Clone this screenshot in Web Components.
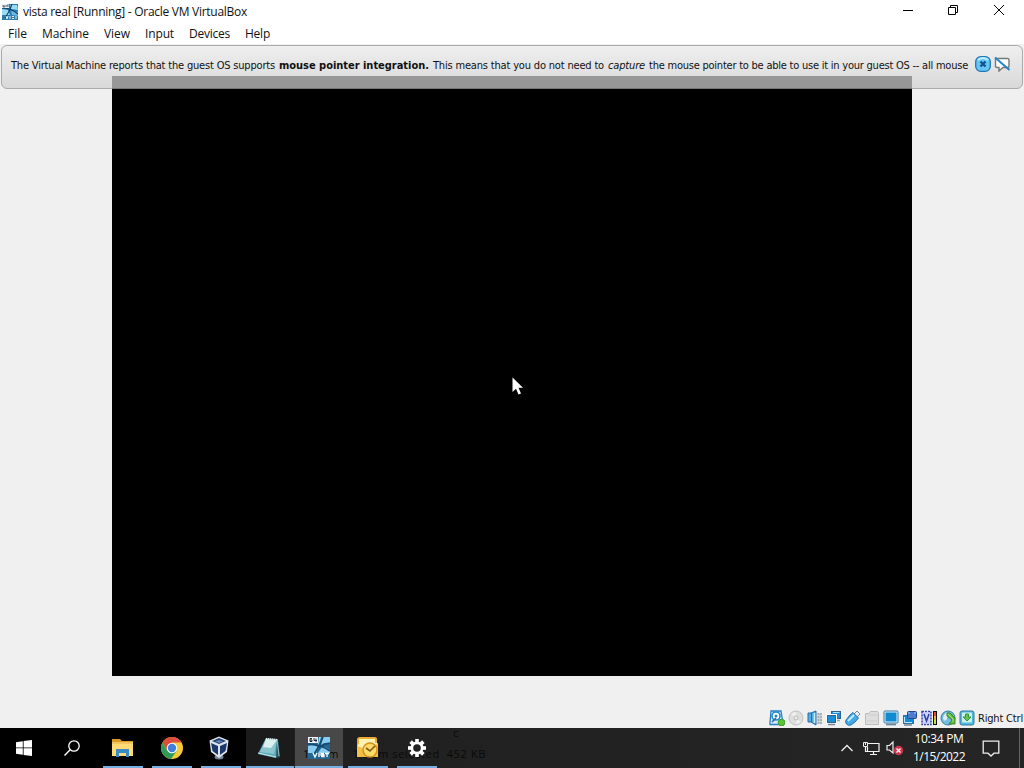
<!DOCTYPE html>
<html lang="en"><head><meta charset="utf-8"><title>vista real [Running] - Oracle VM VirtualBox</title>
<style>html,body{margin:0;width:1024px;height:768px;overflow:hidden;background:#f0f0f0}</style></head>
<body><vm-window></vm-window>
<script>
const define = (name, html, ready) => customElements.define(name, class extends HTMLElement {
  connectedCallback() {
    if (this.shadowRoot) return;
    const t = document.createElement('template');
    t.innerHTML = html;
    this.attachShadow({mode:'open'}).append(t.content.cloneNode(true));
    if (ready) ready(this);
  }
});

// Text run spaced to occupy the width given in its "w" attribute.
define('fit-text', '<style>:host{display:block;white-space:pre;flex:none}span{display:inline-block}</style><span><slot></slot></span>', el => {
  const w = +el.getAttribute('w'), s = el.shadowRoot.querySelector('span');
  el.style.width = w + 'px';
  const n = el.textContent.length;
  s.style.letterSpacing = ((w - s.getBoundingClientRect().width) / n) + 'px';
});

const svg = (w, h, body) => `<svg width="${w}" height="${h}" viewBox="0 0 ${w} ${h}" fill="none">${body}</svg>`;
const icons = {
  vista16: svg(16,16,`<rect width="16" height="16" fill="#2c7db0"/><path d="M0 5L6 6 8 11 0 11zM8 1L15 1 16 6 9 5z" fill="#9bdcf5"/><path d="M9 7L16 8V12L10 11z" fill="#6bb8e4"/><path d="M10 0Q8 7 3 14M0 4Q9 4 16 10" stroke="#0c3f68" stroke-width="1.1"/><rect width="7" height="4" fill="#e9f4fb"/><path d="M1 1V3H3V2H1M4 1V2H6M6 0V3" stroke="#345" stroke-width=".7"/><path d="M4 12L5 15 6 12M8 12V15M10 12.5H12M10 14.5H12M14 12V15" stroke="#fff" stroke-width=".9"/>`),
  min: svg(12,12,`<path d="M1 6.5H11" stroke="#000"/>`),
  restore: svg(12,12,`<path d="M1.5 3.5H8.5V10.5H1.5zM3.5 3V1.5H10.5V8.5H9" stroke="#000"/>`),
  close: svg(12,12,`<path d="M1 1L11 11M11 1L1 11" stroke="#000"/>`),
  ok: svg(16,16,`<rect x=".7" y=".7" width="14.6" height="14.6" rx="5" fill="#67c5f5" stroke="#2377b5" stroke-width="1.3"/><path d="M3 4Q8 0 13 4" stroke="#bcecff" stroke-width="2"/><path d="M5.5 5.5L10.5 10.5M10.5 5.5L5.5 10.5" stroke="#12548c" stroke-width="2.4"/>`),
  mute: svg(17,16,`<path d="M2 2.5H13.5Q15 2.5 15 4V10Q15 11.5 13.5 11.5H9L5 15V11.5H3Q1.5 11.5 1.5 10V3z" fill="#fff" stroke="#777" stroke-width="1.4"/><path d="M1 1.5L15.5 14" stroke="#2587c8" stroke-width="2"/>`),
  hdd: svg(16,16,`<path d="M2 1H12L14 13V14.5H1V12z" fill="#cfeafa" stroke="#2b7fc2" stroke-width="1.3"/><circle cx="7" cy="6" r="4" fill="#fff" stroke="#2388d0" stroke-width="1.6"/><circle cx="7" cy="6" r="1.5" fill="#2580c5"/><path d="M3 12L7 8" stroke="#2668a4" stroke-width="1.5"/><circle cx="12.5" cy="12.5" r="3.3" fill="#5bc336" stroke="#3d9c2a"/>`),
  cd: svg(16,16,`<circle cx="8" cy="8" r="7" fill="#dedede" stroke="#c1c1c1"/><path d="M8 8L3 4Q5 2 8 2zM8 8L13 12Q11 14 8 14z" fill="#eee"/><circle cx="8" cy="8" r="2" fill="#eee" stroke="#bbb"/>`),
  audio: svg(16,16,`<path d="M1 3H4L9 1V15L4 12H1z" fill="#53aee3" stroke="#226ca5"/><path d="M4.5 3V12" stroke="#2470a8"/><path d="M7.5 3V13" stroke="#c5efff" stroke-width="1.5"/><path d="M10 3H15V14H10z" fill="#d4d8da"/><path d="M11.5 3V14M14 3V14" stroke="#a3abb0" stroke-width="1.6" stroke-dasharray="2 1"/>`),
  net: svg(16,16,`<rect x="5.5" y="1.5" width="9" height="7" fill="#1b8ed8" stroke="#32618c"/><path d="M7 2.5H13.5" stroke="#a5e0ff"/><path d="M10 10.5H14" stroke="#9aa" stroke-width="1.5"/><rect x="1.5" y="5.5" width="8" height="7" fill="#1b8ed8" stroke="#fff" stroke-width="3"/><rect x="1.5" y="5.5" width="8" height="7" fill="#1b8ed8" stroke="#31658f"/><path d="M2 14.5H9" stroke="#789" stroke-width="1.5"/>`),
  usb: svg(16,16,`<path d="M8 5L12 1 15 4 11 8z" fill="#eee" stroke="#77899a"/><path d="M5 5L8 2.5 13.5 8 10 12 6 15Q3 16 1.5 14Q0 12 1 10z" fill="#43a9ea" stroke="#2370aa"/><path d="M3 11L9 5" stroke="#c1edff" stroke-width="2"/>`),
  folder: svg(16,16,`<path d="M1.5 3.5H5L6.5 1.5H13.5L14.5 3.5V14.5H1.5z" fill="#dedede" stroke="#bcbcbc"/><path d="M4 5H13M3 11H13" stroke="#ccc"/>`),
  screen: svg(16,16,`<rect x="1" y="1" width="14" height="12" rx="1" fill="#d8f3ff" stroke="#40769e"/><rect x="2.5" y="2.5" width="11" height="9" fill="#118bd0"/><path d="M3 14.5H13" stroke="#6c8799" stroke-width="1.7"/>`),
  record: svg(16,16,`<rect x="1.5" y="5.5" width="10" height="8" fill="#138bd5" stroke="#356f9b"/><path d="M2.5 7V12.5H10" stroke="#b9e8ff"/><path d="M2 15H10" stroke="#789" stroke-width="1.5"/><rect x="5.5" y="1.5" width="9" height="7" rx="1" fill="#4e7cce" stroke="#28488a"/><path d="M7 2V4M13 2V4" stroke="#a9cdfa"/>`),
  cpu: svg(16,16,`<rect x="1" y="1.5" width="9" height="13" fill="#cbd3ff" stroke="#3944a6" stroke-width="1.5" stroke-dasharray="2 1"/><rect x="2" y="2.5" width="7" height="11" fill="#cbd3ff"/><path d="M3 4L5.5 11 8 4" stroke="#303c9d" stroke-width="1.5"/><rect x="12" y="1" width="4" height="14" fill="#111"/><rect x="13" y="2" width="2" height="4" fill="#eb4e2a"/><rect x="13" y="6" width="2" height="4" fill="#efad29"/><rect x="13" y="10" width="2" height="4" fill="#c1e642"/>`),
  mouse: svg(16,16,`<circle cx="8" cy="8" r="7" fill="#70bee4" stroke="#397b9e"/><path d="M4 5Q7 1 8 4L7 9Q4 13 3 8z" fill="#dceef1"/><path d="M7 3H10L15 8V14H9L12 10 7 6z" fill="#63bd3c" stroke="#37892b"/><path d="M8 4L13 9V12" stroke="#a5df84"/>`),
  key: svg(16,16,`<rect x="1" y="1" width="14" height="14" rx="2" fill="#52b9e4" stroke="#347b9f"/><rect x="3" y="2.5" width="10" height="10" rx="1" fill="#c9f1e7"/><path d="M6.5 4H9.5V7H12L8 11 4 7H6.5z" fill="#63c44f" stroke="#369141"/>`),
  start: svg(16,16,`<path d="M0 2.2L6.8 1.2V7.5H0zM7.6 1.1L16 0V7.5H7.6zM0 8.3H6.8V14.8L0 13.8zM7.6 8.3H16V16L7.6 14.9z" fill="#fff"/>`),
  search: svg(16,16,`<circle cx="10" cy="6" r="5.2" stroke="#fff" stroke-width="1.3"/><path d="M6.2 9.8L.5 15.5" stroke="#fff" stroke-width="1.4"/>`),
  explorer: svg(24,24,`<path d="M1 3H9L11 5H22V20H1z" fill="#d99a26"/><path d="M1 6H22V20H1z" fill="#f2c65d"/><path d="M1 8H22V20H1z" fill="#ffda75"/><path d="M5 21V13H18V21H15V17H8V21z" fill="#398bc5"/>`),
  chrome: svg(24,24,`<circle cx="12" cy="12" r="11" fill="#f8ca37"/><path d="M2.47 6.5A11 11 0 0 1 21.53 6.5H12L7.2 14.7z" fill="#dd4c3c"/><path d="M2.47 6.5A11 11 0 0 0 11 23L16.8 14.7H7.2z" fill="#2f9d58"/><circle cx="12" cy="12" r="5.3" fill="#fff"/><circle cx="12" cy="12" r="4.2" fill="#3f80df"/>`),
  cube: svg(24,24,`<ellipse cx="12" cy="21" rx="4.5" ry="2.5" fill="#75849a"/><path d="M12 .5L21.5 4.5 20 16 12 22 4 16 2.5 4.5z" fill="#dbe4ed"/><path d="M5 5L12 2 19 5 12 8z" fill="#213f72"/><path d="M4 7L11 10V19L5.5 15zM13 10L20 7 18.5 15 13 19z" fill="#1b376b"/><path d="M8 5.5L12 4 16 5.5 12 7" fill="#6483ad"/>`),
  notepad: svg(24,24,`<path d="M9 2L21 3 23 21 19 22 1 18z" fill="#295867"/><path d="M9 2L20 3 19 22 1 18z" fill="#5ea9b9"/><path d="M9 3L20 4 17 18 3 16z" fill="#8bc6cf"/><path d="M9 3L20 4 14 12 6 11z" fill="#dcf0ef"/><path d="M20 3L22 20" stroke="#9bb9ba"/><path d="M9 2.5L20 3.5" stroke="#fff" stroke-dasharray="1 1"/><path d="M1 17L19 21" stroke="#c4e3e7"/>`),
  vista: svg(24,24,`<rect x="1" y="1" width="22" height="22" fill="#236692"/><path d="M1 10Q7 8 11 11L9 17 1 17zM16 1H23V7Q17 6 14 9zM15 11Q20 11 23 14V17H11z" fill="#87cdef"/><path d="M12 1H14L12 8 11 9z" fill="#a9def5"/><path d="M16 1Q13 10 7 18M1 8Q15 9 23 15M23 7Q17 8 12 11" stroke="#174a72" stroke-width="1.6"/><path d="M1 1H11V7H1z" fill="#f2f6fa"/><path d="M5 2.5H3V5.5H5V4H3M7 2V4.5H10M9 2.5V6" stroke="#172a3b"/><path d="M6 17L8 21 10 17M12 17V21M17 17.5H14V19H17V20.5H14M18 17.5H22M20 18V21" stroke="#fff" stroke-width="1.3"/>`),
  outlook: svg(24,24,`<path d="M1 4Q1 1 4 1H19Q21 1 21 3V19H1z" fill="#e8ad32"/><path d="M3 3H19V17H3z" fill="#fff1b2"/><path d="M1 9L11 14 22 7V21H1z" fill="#f4bf43"/><path d="M2 9L11 13 21 7" stroke="#fff2b4" stroke-width="2"/><circle cx="14" cy="14" r="7" fill="#ffdc65" stroke="#d48f1e" stroke-width="1.4"/><path d="M10 12L14 15 19 10" stroke="#815a22" stroke-width="1.7"/>`),
  gear: svg(20,20,`<g fill="#fff"><rect x="8.2" y="1" width="3.6" height="18"/><rect x="8.2" y="1" width="3.6" height="18" transform="rotate(45 10 10)"/><rect x="8.2" y="1" width="3.6" height="18" transform="rotate(90 10 10)"/><rect x="8.2" y="1" width="3.6" height="18" transform="rotate(135 10 10)"/><circle cx="10" cy="10" r="6.5"/></g><circle cx="10" cy="10" r="3.8" fill="#222"/>`),
  chevron: svg(14,8,`<path d="M1.5 7L7 1.5L12.5 7" stroke="#eee" stroke-width="1.3"/>`),
  lan: svg(17,15,`<path d="M5 2.5H16V10.5H4.5V6M10.5 11V13.5M7 13.5H14M2.5 6V10.5H4" stroke="#f2f2f2" stroke-width="1.2"/><path d="M.5 1.5H4.5V5.5H.5zM2.5 2V4" stroke="#eee"/>`),
  volume: svg(18,16,`<path d="M1 5.5H3.5L7 2V13L3.5 10H1z" stroke="#eee" stroke-width="1.2"/><circle cx="12.5" cy="10.5" r="4.7" fill="#cf354a"/><path d="M10.5 8.5L14.5 12.5M14.5 8.5L10.5 12.5" stroke="#fff" stroke-width="1.3"/>`),
  notice: svg(18,17,`<path d="M1.2 1.2H16.8V13.2H12L9 16 6 13.2H1.2z" stroke="#eee" stroke-width="1.3"/>`),
  pointer: svg(12,19,`<path d="M.5 .5V15L4 11.8 6.5 17.5 9 16.4 6.5 10.8H11z" fill="#fff"/>`)
};
define('ui-icon', '<style>:host{display:flex;flex:none}svg{display:block}</style><span></span>', el => { el.shadowRoot.querySelector('span').innerHTML = icons[el.getAttribute('name')]; });

define('title-bar', `<style>:host{display:flex;height:24px;align-items:center;background:#fff;font:12px/16px "Open Sans","Noto Sans",sans-serif;color:#111;padding:0 19px 0 2px;box-sizing:border-box}
fit-text{margin-left:5px}.b{display:flex;margin-left:auto;gap:34px;margin-top:-4px}</style><ui-icon name="vista16"></ui-icon><fit-text w="224">vista real [Running] - Oracle VM VirtualBox</fit-text><div class="b"><ui-icon name="min"></ui-icon><ui-icon name="restore" style="margin:0 0 0 -1px"></ui-icon><ui-icon name="close"></ui-icon></div>`);
define('menu-bar', `<style>:host{display:flex;height:20px;align-items:center;background:#fff;padding-left:8px;gap:15px;font:12px/16px "Open Sans","Noto Sans",sans-serif;color:#111}</style>
<fit-text w="19">File</fit-text><fit-text w="47">Machine</fit-text><fit-text w="26">View</fit-text><fit-text w="29">Input</fit-text><fit-text w="41">Devices</fit-text><fit-text w="25">Help</fit-text>`);
define('message-bar', `<style>:host{display:flex;box-sizing:border-box;height:44px;width:1022px;border:1px solid #aaa;border-radius:6px;background:linear-gradient(#efefef,#d9d9d9);position:relative;font:11px/16px "DejaVu Sans Condensed","DejaVu Sans",sans-serif;font-stretch:condensed;color:#111;padding:12px 0 0 9px;align-items:flex-start}
.shade{position:absolute;left:110px;top:30px;width:800px;height:13px;background:#979797;border-bottom:1px solid #777;box-sizing:border-box}fit-text{margin-right:4px}ui-icon{margin:-2px 0 0 3px}</style>
<div class="shade"></div><fit-text w="264">The Virtual Machine reports that the guest OS supports</fit-text><fit-text w="150" style="font-weight:bold">mouse pointer integration.</fit-text><fit-text w="171">This means that you do not need to</fit-text><fit-text w="37" style="font-style:italic">capture</fit-text><fit-text w="319">the mouse pointer to be able to use it in your guest OS -- all mouse</fit-text><ui-icon name="ok"></ui-icon><ui-icon name="mute"></ui-icon>`);
define('guest-screen', `<style>:host{display:block;width:800px;height:587px;background:#000;position:relative}ui-icon{position:absolute;left:400px;top:288px}</style><ui-icon name="pointer"></ui-icon>`);
define('status-bar', `<style>:host{display:flex;height:20px;align-items:center;justify-content:flex-end;gap:3px;padding-right:1px;font:11px/16px "DejaVu Sans Condensed","DejaVu Sans",sans-serif;font-stretch:condensed;color:#111}fit-text{margin:1px 0 0}</style>${['hdd','cd','audio','net','usb','folder','screen','record','cpu','mouse','key'].map(n=>`<ui-icon name="${n}"></ui-icon>`).join('')}<fit-text w="45">Right Ctrl</fit-text>`);
define('task-button', `<style>:host{display:flex;width:40px;height:40px;box-sizing:border-box;align-items:center;justify-content:center;padding-top:1px;border-bottom:2px solid #76aee1;flex:none}:host([plain]){width:48px;border-bottom-color:transparent}:host([wide]){width:48px}:host([dark]){background:#1b1b1b}:host([active]){background:#484848}</style><slot></slot>`);
define('task-bar', `<style>:host{display:flex;height:40px;background:linear-gradient(90deg,#000 0 246px,#202020 246px 294px,#252525);position:relative;align-items:center}
.tasks{display:flex;gap:9px;margin-left:7px}.ghost{position:absolute;z-index:1;color:#090909;font:11px/14px "Open Sans",sans-serif}.tray{display:flex;align-items:center;margin-left:auto;height:40px;color:#fff}.clock{display:flex;flex-direction:column;align-items:center;font:12px/18px "Open Sans","Noto Sans",sans-serif;width:54px;margin:-1px 16px 0 8px}.edge{height:40px;border-left:1px solid #666;margin-left:19px;width:4px}ui-icon{position:relative;z-index:2}</style>
<fit-text w="183" class="ghost" style="left:303px;top:19px">1 item    1 item selected  452 KB</fit-text><fit-text w="7" class="ghost" style="left:453px;top:-2px">c</fit-text>
<task-button plain><ui-icon name="start"></ui-icon></task-button><task-button plain><ui-icon name="search"></ui-icon></task-button>
<div class="tasks"><task-button><ui-icon name="explorer"></ui-icon></task-button><task-button><ui-icon name="chrome"></ui-icon></task-button><task-button><ui-icon name="cube" style="margin-right:4px"></ui-icon></task-button><task-button wide dark style="margin-left:-4px"><ui-icon name="notepad" style="margin-right:3px"></ui-icon></task-button><task-button wide active style="margin-left:-8px"><ui-icon name="vista"></ui-icon></task-button><task-button style="margin-left:-4px"><ui-icon name="outlook"></ui-icon></task-button><task-button><ui-icon name="gear"></ui-icon></task-button></div>
<div class="tray"><ui-icon name="chevron"></ui-icon><ui-icon name="lan" style="margin-left:9px"></ui-icon><ui-icon name="volume" style="margin-left:6px"></ui-icon><div class="clock"><fit-text w="49">10:34 PM</fit-text><fit-text w="52">1/15/2022</fit-text></div><ui-icon name="notice"></ui-icon><div class="edge"></div></div>`);
define('vm-window', `<style>:host{display:flex;flex-direction:column;width:1024px;height:768px;background:#f0f0f0}message-bar{margin:1px 0 0 1px;flex:none}guest-screen{margin-left:112px;flex:none}status-bar{margin-top:32px;flex:none}task-bar{flex:none}</style><title-bar></title-bar><menu-bar></menu-bar><message-bar></message-bar><guest-screen></guest-screen><status-bar></status-bar><task-bar></task-bar>`);
</script></body></html>
